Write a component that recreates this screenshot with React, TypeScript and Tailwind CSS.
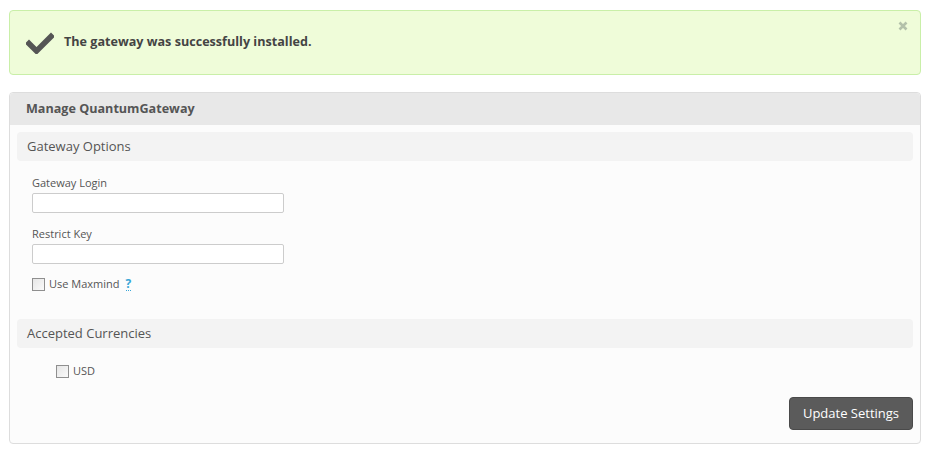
const CheckIcon = () => (
  <svg width="28" height="22" viewBox="0 0 28 22" className="shrink-0">
    <path d="M3 11.5 L10.5 19 L25 4.5" fill="none" stroke="#555" strokeWidth="5.5" strokeLinecap="square" strokeLinejoin="miter" />
  </svg>
);

const Checkbox = () => (
  <span className="inline-block w-[13px] h-[13px] border border-[#8f8f8f] bg-gradient-to-br from-[#e6e6e6] to-[#fafafa] shrink-0" />
);

const SectionHeader = ({ title }: { title: string }) => (
  <div className="h-[29px] mx-[7px] rounded bg-[#f3f3f3] flex items-center px-[10px] text-[13px] text-[#555]">
    {title}
  </div>
);

const Field = ({ label }: { label: string }) => (
  <div>
    <div className="text-[11px] text-[#555] leading-[16px] mb-[2px]">{label}</div>
    <input className="block w-[252px] h-[20px] border border-[#ccc] rounded-[2px] bg-white outline-none" />
  </div>
);

export default function App() {
  return (
    <div className="w-[930px] h-[456px] bg-white pt-[10px] px-[9px] font-['Open_Sans',sans-serif]">
      <div className="relative h-[65px] border border-[#c9efa8] bg-[#effcd9] rounded flex items-center pl-[16px] gap-[10px]">
        <CheckIcon />
        <span className="text-[12.6px] font-bold text-[#444]">The gateway was successfully installed.</span>
        <svg width="10" height="10" viewBox="0 0 10 10" className="absolute right-[12px] top-[10px]">
          <path d="M1.5 1.5 L8.5 8.5 M8.5 1.5 L1.5 8.5" stroke="#b3c1aa" strokeWidth="2.6" />
        </svg>
      </div>

      <div className="mt-[17px] h-[352px] border border-[#ddd] rounded bg-[#fcfcfc] flex flex-col">
        <div className="h-[32px] shrink-0 bg-[#e8e8e8] rounded-t flex items-center px-[16px] text-[12.6px] font-bold text-[#555]">
          Manage QuantumGateway
        </div>
        <div className="pt-[7px]">
          <SectionHeader title="Gateway Options" />
          <div className="pl-[22px] pt-[14px] flex flex-col gap-[13px]">
            <Field label="Gateway Login" />
            <Field label="Restrict Key" />
            <label className="flex items-center gap-[4px] text-[11px] text-[#555] leading-[16px] mt-[-1px]">
              <Checkbox />
              <span>Use Maxmind</span>
              <span className="ml-[2px] text-[#3aa6d6] font-bold border-b border-dotted border-[#3aa6d6] leading-[13px] text-[12px]">?</span>
            </label>
          </div>
          <div className="mt-[27px]">
            <SectionHeader title="Accepted Currencies" />
          </div>
          <label className="flex items-center gap-[4px] pl-[46px] mt-[15px] text-[11px] text-[#555] leading-[16px]">
            <Checkbox />
            <span>USD</span>
          </label>
          <div className="flex justify-end pr-[7px] mt-[18px]">
            <button className="h-[33px] w-[124px] bg-[#5b5b5b] text-white text-[13px] rounded border border-[#4a4a4a]">
              Update Settings
            </button>
          </div>
        </div>
      </div>
    </div>
  );
}
